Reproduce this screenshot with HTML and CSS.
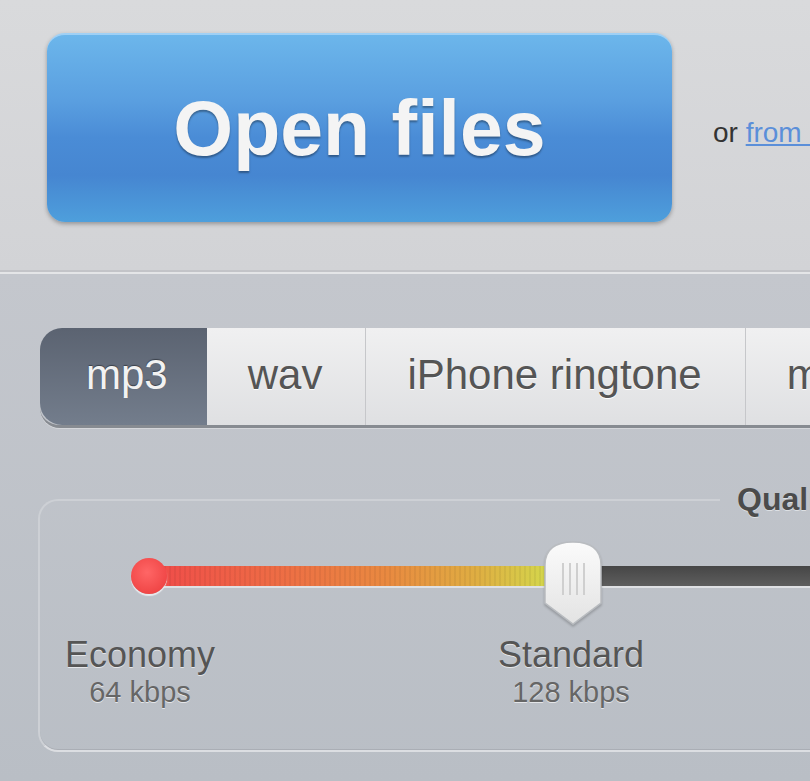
FILE: index.html
```html
<!DOCTYPE html>
<html>
<head>
    <title>Audio Converter</title>
    <meta charset="utf-8">
    <link rel="stylesheet" href="styles.css">
</head>
<body>
    <div class="top">
        <button class="open-btn">Open files</button>
        <div class="alt">or <a href="#">from Google Drive, Dropbox, URL</a></div>
    </div>
    <div class="divider"></div>
    <div class="bottom">
        <div class="tabs">
            <div class="tab active">mp3</div>
            <div class="tab">wav</div>
            <div class="tab">iPhone ringtone</div>
            <div class="tab">m4a</div>
            <div class="tab">flac</div>
        </div>
        <fieldset class="quality">
            <legend>Quality</legend>
            <div class="slider">
                <div class="dot"></div>
                <div class="fill"></div>
                <svg class="knob" width="58" height="84" viewBox="0 0 58 84">
                    <defs>
                        <linearGradient id="kg" x1="0" y1="0" x2="0" y2="1">
                            <stop offset="0" stop-color="#fbfbfb"/>
                            <stop offset="1" stop-color="#e3e3e3"/>
                        </linearGradient>
                    </defs>
                    <path d="M1 24 C1 8 12 1 29 1 C46 1 57 8 57 24 L57 62 L29 83 L1 62 Z" fill="url(#kg)" stroke="#b9bcc0" stroke-width="1.5"/>
                    <line x1="19" y1="22" x2="19" y2="54" stroke="#cfcfcf" stroke-width="2"/>
                    <line x1="26" y1="22" x2="26" y2="54" stroke="#cfcfcf" stroke-width="2"/>
                    <line x1="33" y1="22" x2="33" y2="54" stroke="#cfcfcf" stroke-width="2"/>
                    <line x1="40" y1="22" x2="40" y2="54" stroke="#cfcfcf" stroke-width="2"/>
                </svg>
                <div class="rest"></div>
            </div>
            <div class="labels">
                <div class="label">Economy<span>64 kbps</span></div>
                <div class="label">Standard<span>128 kbps</span></div>
                <div class="label">Good<span>192 kbps</span></div>
            </div>
        </fieldset>
    </div>
</body>
</html>
```

FILE: styles.css
```css
body {
    margin: 0;
    width: 810px;
    height: 781px;
    overflow: hidden;
    font-family: "Liberation Sans", Arial, sans-serif;
    background: #bec2c9;
}
.top {
    height: 237px;
    padding: 33px 0 0 47px;
    display: flex;
    align-items: flex-start;
    white-space: nowrap;
    background: linear-gradient(#d9dadc, #d2d3d6);
}
.open-btn {
    flex: none;
    width: 625px;
    height: 189px;
    border: none;
    border-radius: 18px;
    border-top: 2px solid #9fd0f5;
    background: linear-gradient(#6cb6eb 0%, #5a9fe0 35%, #4a8cd6 55%, #4686d1 75%, #4e9fdc 100%);
    box-shadow: 0 2px 4px rgba(0, 0, 0, 0.3);
    color: #f4f4f4;
    font: bold 77px "Liberation Sans", Arial, sans-serif;
    text-shadow: 0 2px 2px rgba(0, 0, 0, 0.35);
}
.alt {
    margin: 84px 0 0 41px;
    font-size: 28px;
    color: #333;
}
.alt a {
    color: #5b8fd9;
}
.divider {
    height: 2px;
    background: #c3c4c8;
    border-bottom: 2px solid #e4e5e7;
}
.bottom {
    height: 453px;
    padding: 54px 0 0 38px;
    background: linear-gradient(#c4c7cd, #b9bec5);
}
.tabs {
    display: flex;
    margin-left: 2px;
    height: 97px;
    white-space: nowrap;
    border-bottom: 3px solid #878b91;
    border-bottom-left-radius: 20px;
    box-shadow: 0 1px 0 #d4d6da;
    width: 1200px;
}
.tab {
    padding: 0 43px 0 41px;
    line-height: 94px;
    font-size: 42px;
    color: #555;
    text-shadow: 0 1px 0 #fff;
    background: linear-gradient(#f0f0f1, #dfe0e2);
    border-right: 1px solid #c6c7ca;
}
.tab.active {
    color: #f2f2f2;
    text-shadow: 0 -1px 1px #3a404a;
    background: linear-gradient(#5b6371, #737d8c);
    border-radius: 22px 0 0 22px;
    border-right: none;
    padding: 0 39px 0 46px;
}
.quality {
    margin: 53px 0 0 0;
    padding: 23px 0 42px 0;
    width: 1200px;
    border: 2px solid #cdd0d5;
    border-bottom-color: #dcdee2;
    border-radius: 20px;
    box-shadow: inset 0 -1px 0 #aaaeb5;
}
.quality legend {
    margin-left: 680px;
    padding: 0 17px;
    font-weight: bold;
    font-size: 32px;
    color: #4b4b4b;
    text-shadow: 0 1px 0 #dde0e4;
}
.slider {
    display: flex;
    align-items: flex-start;
    margin-left: 91px;
    height: 84px;
}
.dot {
    flex: none;
    width: 36px;
    height: 36px;
    margin-top: 17px;
    border-radius: 50%;
    background: radial-gradient(circle at 45% 40%, #ff6666, #ea3a3a);
    box-shadow: 0 2px 1px #e8eaed;
    position: relative;
    z-index: 2;
}
.fill {
    flex: none;
    width: 400px;
    height: 20px;
    margin: 25px -5px 0 -18px;
    background:
        repeating-linear-gradient(90deg, rgba(0, 0, 0, 0.05) 0 2px, transparent 2px 5px),
        linear-gradient(90deg, #f04a4a 0%, #ee6a45 30%, #e98a40 60%, #dfae42 82%, #d4d84c 100%);
    box-shadow: 0 2px 0 #dfe1e4;
}
.knob {
    flex: none;
    position: relative;
    z-index: 2;
    filter: drop-shadow(0 2px 1px rgba(0, 0, 0, 0.2));
}
.rest {
    flex: none;
    width: 500px;
    height: 20px;
    margin: 25px 0 0 -4px;
    background: linear-gradient(#464646, #5e5e5e);
    box-shadow: 0 2px 0 #dfe1e4;
}
.labels {
    display: flex;
    gap: 231px;
    margin-top: 9px;
}
.label {
    width: 200px;
    text-align: center;
    font-size: 36px;
    line-height: 42px;
    color: #555;
    text-shadow: 0 1px 0 #e4e6e9;
}
.label span {
    display: block;
    font-size: 29px;
    line-height: 32px;
    color: #666;
}
```
